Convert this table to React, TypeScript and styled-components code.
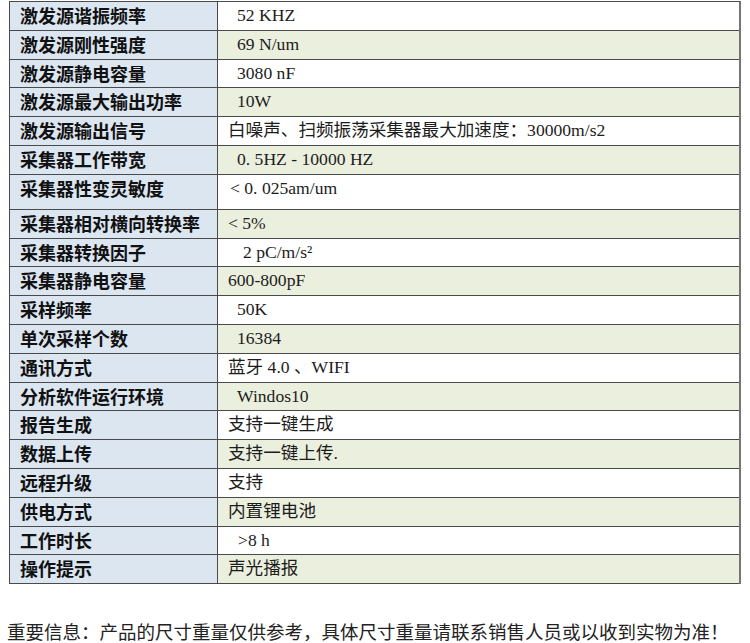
import React from "react";
import styled, { createGlobalStyle } from "styled-components";

const GlobalStyle = createGlobalStyle`
  html, body {
    margin: 0;
    padding: 0;
    background: #ffffff;
  }
  body {
    font-family: "Noto Sans CJK SC", sans-serif;
  }
`;

const Page = styled.div`
  width: 750px;
  box-sizing: border-box;
  padding: 1px 0 0 9px;
`;

const SpecTable = styled.div`
  width: 732px;
  box-sizing: border-box;
  display: flex;
  flex-direction: column;
  border-top: 1px solid #4a4a4a;
  border-left: 1px solid #4a4a4a;
  border-right: 2px solid #767676;
`;

const SpecRow = styled.div<{ $tall?: boolean }>`
  display: grid;
  grid-template-columns: 208px 1fr;
  height: ${(p) => (p.$tall ? 35 : 28.8)}px;
  box-sizing: border-box;
  border-bottom: 1px solid #4a4a4a;
`;

const Label = styled.div`
  box-sizing: border-box;
  background: #dce6f1;
  border-right: 1px solid #4a4a4a;
  padding-left: 10px;
  overflow: hidden;
  white-space: nowrap;
  font-family: "Noto Sans CJK SC", sans-serif;
  font-weight: 700;
  font-size: 18px;
  line-height: 27px;
  color: #111111;
`;

const Value = styled.div<{ $shaded: boolean; $indent: number }>`
  box-sizing: border-box;
  background: ${(p) => (p.$shaded ? "#ebefde" : "#ffffff")};
  padding-left: ${(p) => 10 + p.$indent}px;
  overflow: hidden;
  white-space: pre;
  font-family: "Liberation Serif", "Noto Sans CJK SC", serif;
  font-weight: 400;
  font-size: 17.6px;
  line-height: 27px;
  color: #1c1c1c;
`;

const Note = styled.p`
  margin: 35px 0 0 -2px;
  font-family: "Noto Sans CJK SC", sans-serif;
  font-size: 18.5px;
  line-height: 24px;
  color: #222222;
  white-space: nowrap;
`;

type Spec = { label: string; value: string; indent: number; tall?: boolean };

const specs: Spec[] = [
  { label: "激发源谐振频率", value: "52 KHZ", indent: 9 },
  { label: "激发源刚性强度", value: "69 N/um", indent: 9 },
  { label: "激发源静电容量", value: "3080 nF", indent: 9 },
  { label: "激发源最大输出功率", value: "10W", indent: 9 },
  { label: "激发源输出信号", value: "白噪声、扫频振荡采集器最大加速度：30000m/s2", indent: 0 },
  { label: "采集器工作带宽", value: "0. 5HZ - 10000 HZ", indent: 9 },
  { label: "采集器性变灵敏度", value: "< 0. 025am/um", indent: 2, tall: true },
  { label: "采集器相对横向转换率", value: "< 5%", indent: 0 },
  { label: "采集器转换因子", value: "2 pC/m/s²", indent: 15 },
  { label: "采集器静电容量", value: "600-800pF", indent: 0 },
  { label: "采样频率", value: "50K", indent: 9 },
  { label: "单次采样个数", value: "16384", indent: 9 },
  { label: "通讯方式", value: "蓝牙 4.0 、WIFI", indent: 0 },
  { label: "分析软件运行环境", value: "Windos10", indent: 9 },
  { label: "报告生成", value: "支持一键生成", indent: 0 },
  { label: "数据上传", value: "支持一键上传.", indent: 0 },
  { label: "远程升级", value: "支持", indent: 0 },
  { label: "供电方式", value: "内置锂电池", indent: 0 },
  { label: "工作时长", value: ">8 h", indent: 10 },
  { label: "操作提示", value: "声光播报", indent: 0 },
];

export default function App() {
  return (
    <>
      <GlobalStyle />
      <Page>
        <SpecTable>
          {specs.map((s, i) => (
            <SpecRow key={s.label} $tall={s.tall}>
              <Label>{s.label}</Label>
              <Value $shaded={i % 2 === 1} $indent={s.indent}>
                {s.value}
              </Value>
            </SpecRow>
          ))}
        </SpecTable>
        <Note>重要信息：产品的尺寸重量仅供参考，具体尺寸重量请联系销售人员或以收到实物为准！</Note>
      </Page>
    </>
  );
}
